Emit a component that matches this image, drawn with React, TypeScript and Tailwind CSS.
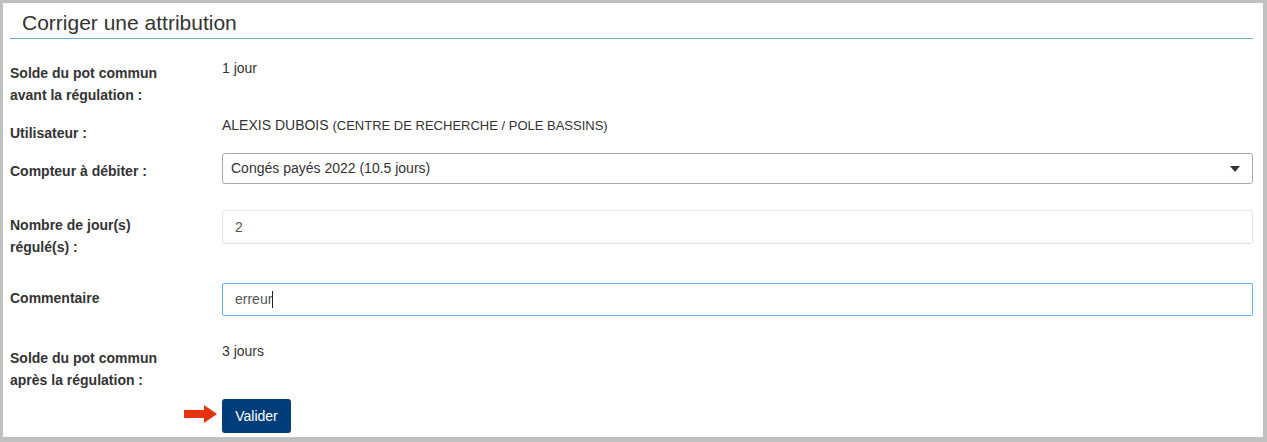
import React from 'react'

const FONT = { fontFamily: '"Liberation Sans", Arial, sans-serif' }

function Label({ children, pt }: { children: React.ReactNode; pt: string }) {
  return (
    <div className={`w-[212px] shrink-0 text-[14px] leading-[22px] font-bold text-[#333] ${pt}`}>
      {children}
    </div>
  )
}

function RedArrow() {
  return (
    <svg width="33" height="18" viewBox="0 0 33 18" className="block">
      <rect x="0" y="5" width="21" height="8" fill="#e8330f" />
      <polygon points="20,0 33,9 20,18" fill="#e8330f" />
    </svg>
  )
}

export default function App() {
  return (
    <div className="w-[1267px] bg-[#c0c0c0] pt-[3px] pl-[3px] pr-[4px] pb-[5px]" style={FONT}>
      <div className="bg-white pl-[7px] pr-[10px] pb-[4px] flex flex-col">
        {/* Title */}
        <div className="pt-[6px] pb-[1px] pl-[12px] border-b border-[#62acdc] text-[21px] leading-[28px] text-[#333]">
          Corriger une attribution
        </div>

        {/* Solde avant */}
        <div className="flex items-start mt-[18px]">
          <Label pt="pt-[5px]">
            Solde du pot commun
            <br />
            avant la régulation :
          </Label>
          <div className="text-[14px] leading-[22px] text-[#333]">1 jour</div>
        </div>

        {/* Utilisateur */}
        <div className="flex items-start mt-[8px]">
          <Label pt="pt-[8px]">Utilisateur :</Label>
          <div className="text-[14px] leading-[22px] text-[#333]">
            ALEXIS DUBOIS <span className="text-[13px]">(CENTRE DE RECHERCHE / POLE BASSINS)</span>
          </div>
        </div>

        {/* Compteur */}
        <div className="flex items-start mt-[9px]">
          <Label pt="pt-[7px]">Compteur à débiter :</Label>
          <div className="flex-1 h-[31px] border border-[#aaaaaa] rounded-[3px] flex items-center justify-between pl-[8px] pr-[12px] text-[14px] text-[#333]">
            <span>Congés payés 2022 (10.5 jours)</span>
            <span className="w-0 h-0 border-l-[5px] border-r-[5px] border-t-[6px] border-l-transparent border-r-transparent border-t-[#333]" />
          </div>
        </div>

        {/* Nombre de jours */}
        <div className="flex items-start mt-[26px]">
          <Label pt="pt-[4px]">
            Nombre de jour(s)
            <br />
            régulé(s) :
          </Label>
          <div className="flex-1 h-[34px] border border-[#e3e3ea] rounded-[2px] flex items-center pl-[12px] text-[14px] text-[#555]">
            2
          </div>
        </div>

        {/* Commentaire */}
        <div className="flex items-start mt-[25px]">
          <Label pt="pt-[4px]">Commentaire</Label>
          <div className="flex-1 h-[33px] border border-[#66afe9] rounded-[2px] flex items-center pl-[12px] text-[14px] text-[#555]">
            erreur
            <span className="inline-block w-px h-[17px] bg-[#222]" />
          </div>
        </div>

        {/* Solde après */}
        <div className="flex items-start mt-[24px]">
          <Label pt="pt-[7px]">
            Solde du pot commun
            <br />
            après la régulation :
          </Label>
          <div className="text-[14px] leading-[22px] text-[#333]">3 jours</div>
        </div>

        {/* Valider */}
        <div className="flex items-start mt-[8px]">
          <div className="w-[212px] shrink-0 flex justify-end pr-[5px] pt-[6px]">
            <RedArrow />
          </div>
          <button className="w-[69px] h-[34px] rounded-[3px] bg-[#003d7a] text-white text-[14px]">
            Valider
          </button>
        </div>
      </div>
    </div>
  )
}
